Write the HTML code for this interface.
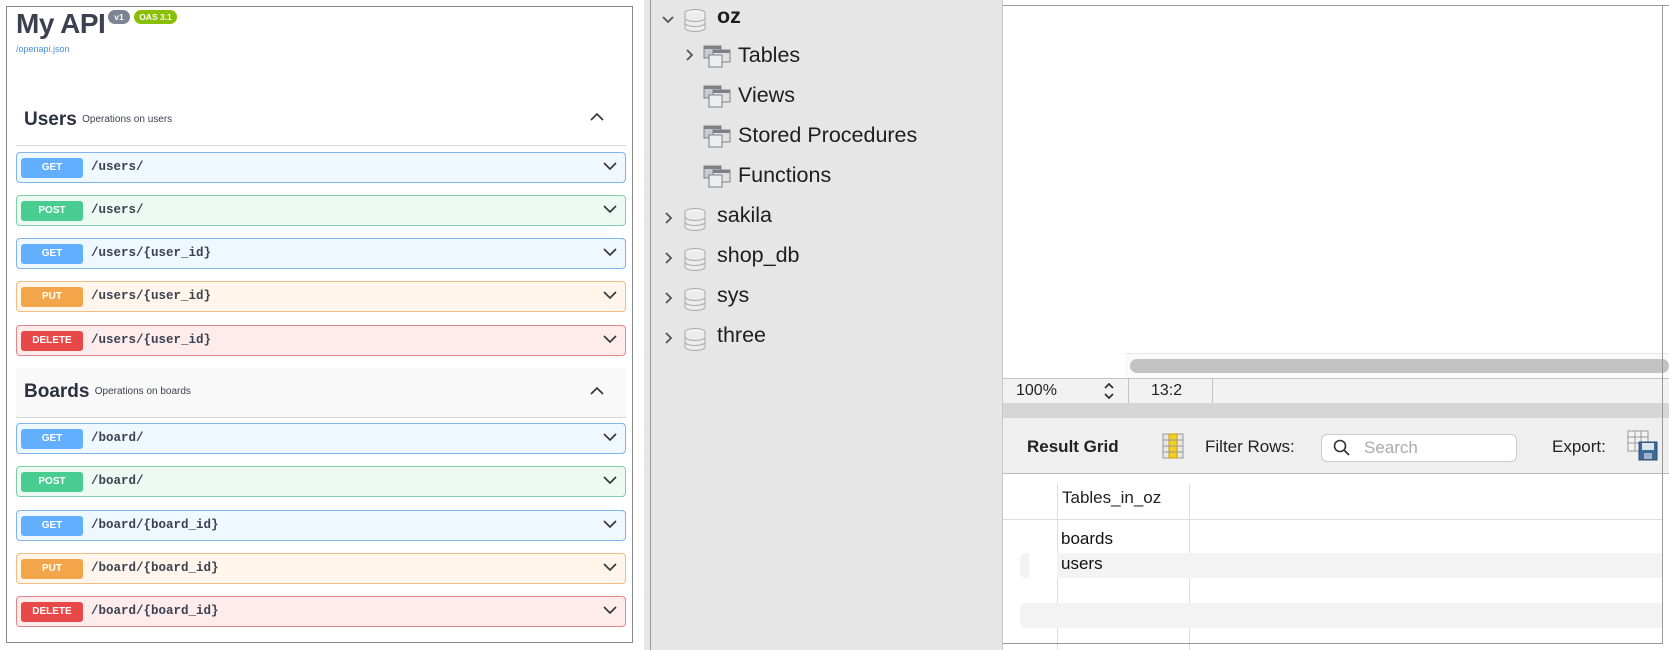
<!DOCTYPE html>
<html><head><meta charset="utf-8"><style>
*{margin:0;padding:0;box-sizing:border-box}
body{width:1669px;height:650px;position:relative;overflow:hidden;background:#fff;font-family:"Liberation Sans",sans-serif;color:#3b4151}
.a{position:absolute}
.row{position:absolute;left:16px;width:610px;height:31px;border:1px solid;border-radius:4px}
.m{position:absolute;left:4px;top:5px;width:62px;height:20px;border-radius:3px;color:#fff;font-size:10px;font-weight:bold;text-align:center;line-height:20px}
.p{position:absolute;left:74px;top:0;line-height:29px;font-family:"Liberation Mono",monospace;font-weight:bold;font-size:12.5px;color:#3b4151}
.chev{position:absolute;right:8px;top:8px}
.get{background:#eff7ff;border-color:#7fb5e8}.get .m{background:#61affe}
.post{background:#edfaf4;border-color:#7fcfa6}.post .m{background:#49cc90}
.put{background:#fff5ea;border-color:#f1bd84}.put .m{background:#f2a649}
.del{background:#feebeb;border-color:#e38686}.del .m{background:#e84848}
.tr{position:absolute;font-size:21.5px;color:#1e1e1e;line-height:26px}
</style></head><body>
<div class="a" style="left:6px;top:6px;width:627px;height:637px;border:1px solid #888"></div>
<div class="a" style="left:16px;top:7px;font-size:28px;font-weight:bold;color:#3b4151;line-height:34px;letter-spacing:-0.5px">My API</div>
<div class="a" style="left:108px;top:10px;width:22px;height:14px;border-radius:7px;background:#7d8492;color:#fff;font-size:8.5px;font-weight:bold;text-align:center;line-height:14px">v1</div>
<div class="a" style="left:134px;top:10px;width:43px;height:14px;border-radius:7px;background:#89bf04;color:#fff;font-size:8.5px;font-weight:bold;text-align:center;line-height:14px">OAS 3.1</div>
<div class="a" style="left:16px;top:44px;font-size:9px;color:#4990e2">/openapi.json</div>

<div class="a" style="left:24px;top:108px;font-size:19px;line-height:24px;color:#2b3141;font-weight:bold">Users <span style="font-size:10px;vertical-align:middle;font-weight:normal;color:#3b4151">Operations on users</span></div>
<svg class="a" style="left:590px;top:112px" width="14" height="10"><path d="M1 8 L7 2 L13 8" fill="none" stroke="#333" stroke-width="1.6"/></svg>
<div class="a" style="left:16px;top:145px;width:610px;height:1px;background:#d8d8d8"></div>

<div class="a" style="left:16px;top:368px;width:610px;height:50px;background:#f9f9f9;border-bottom:1px solid #d8d8d8"></div>
<div class="a" style="left:24px;top:380px;font-size:19px;line-height:24px;color:#2b3141;font-weight:bold">Boards <span style="font-size:10px;vertical-align:middle;font-weight:normal;color:#3b4151">Operations on boards</span></div>
<svg class="a" style="left:590px;top:386px" width="14" height="10"><path d="M1 8 L7 2 L13 8" fill="none" stroke="#333" stroke-width="1.6"/></svg>

<div class="row get" style="top:152px"><div class="m">GET</div><div class="p">/users/</div><svg class="chev" width="14" height="10"><path d="M1 2 L7 8 L13 2" fill="none" stroke="#333" stroke-width="1.6"/></svg></div>
<div class="row post" style="top:195px"><div class="m">POST</div><div class="p">/users/</div><svg class="chev" width="14" height="10"><path d="M1 2 L7 8 L13 2" fill="none" stroke="#333" stroke-width="1.6"/></svg></div>
<div class="row get" style="top:238px"><div class="m">GET</div><div class="p">/users/{user_id}</div><svg class="chev" width="14" height="10"><path d="M1 2 L7 8 L13 2" fill="none" stroke="#333" stroke-width="1.6"/></svg></div>
<div class="row put" style="top:281px"><div class="m">PUT</div><div class="p">/users/{user_id}</div><svg class="chev" width="14" height="10"><path d="M1 2 L7 8 L13 2" fill="none" stroke="#333" stroke-width="1.6"/></svg></div>
<div class="row del" style="top:325px"><div class="m">DELETE</div><div class="p">/users/{user_id}</div><svg class="chev" width="14" height="10"><path d="M1 2 L7 8 L13 2" fill="none" stroke="#333" stroke-width="1.6"/></svg></div>

<div class="row get" style="top:423px"><div class="m">GET</div><div class="p">/board/</div><svg class="chev" width="14" height="10"><path d="M1 2 L7 8 L13 2" fill="none" stroke="#333" stroke-width="1.6"/></svg></div>
<div class="row post" style="top:466px"><div class="m">POST</div><div class="p">/board/</div><svg class="chev" width="14" height="10"><path d="M1 2 L7 8 L13 2" fill="none" stroke="#333" stroke-width="1.6"/></svg></div>
<div class="row get" style="top:510px"><div class="m">GET</div><div class="p">/board/{board_id}</div><svg class="chev" width="14" height="10"><path d="M1 2 L7 8 L13 2" fill="none" stroke="#333" stroke-width="1.6"/></svg></div>
<div class="row put" style="top:553px"><div class="m">PUT</div><div class="p">/board/{board_id}</div><svg class="chev" width="14" height="10"><path d="M1 2 L7 8 L13 2" fill="none" stroke="#333" stroke-width="1.6"/></svg></div>
<div class="row del" style="top:596px"><div class="m">DELETE</div><div class="p">/board/{board_id}</div><svg class="chev" width="14" height="10"><path d="M1 2 L7 8 L13 2" fill="none" stroke="#333" stroke-width="1.6"/></svg></div>

<div class="a" style="left:644px;top:0;width:359px;height:650px;background:#e6e6e6"></div>
<div class="a" style="left:650px;top:0;width:1px;height:650px;background:#9a9a9a"></div>
<div class="a" style="left:1002px;top:0;width:1px;height:650px;background:#c8c8c8"></div>
<div class="a" style="left:1003px;top:5px;width:666px;height:1px;background:#999"></div>

<svg class="a" style="left:0;top:0" width="1003" height="360">
<defs>
<g id="db"><ellipse cx="11" cy="4" rx="10" ry="3.5" fill="#f2f2f2" stroke="#aaa"/><path d="M1 4 V19 A10 3.5 0 0 0 21 19 V4" fill="#ececec" stroke="#aaa"/><path d="M1 9 A10 3.5 0 0 0 21 9 M1 14 A10 3.5 0 0 0 21 14" fill="none" stroke="#aaa"/></g>
<g id="fo"><rect x="0" y="0" width="17" height="12" fill="#c9ccd0" stroke="#7d8186"/><rect x="0" y="0" width="17" height="3" fill="#7d8186"/><rect x="9" y="4" width="17" height="12" fill="#dfe1e3" stroke="#7d8186"/><rect x="9" y="4" width="17" height="3" fill="#7d8186"/><rect x="5" y="9" width="13" height="12" fill="#eceef0" stroke="#7d8186"/></g>
<path id="cr" d="M0 0 L5 5 L0 10" fill="none" stroke="#555" stroke-width="1.8"/>
</defs>
<path d="M663 17 L668 22 L673 17" fill="none" stroke="#555" stroke-width="1.8"/>
<use href="#db" x="684" y="9"/>
<use href="#cr" x="687" y="50"/><use href="#fo" x="704" y="46"/>
<use href="#fo" x="704" y="86"/>
<use href="#fo" x="704" y="126"/>
<use href="#fo" x="704" y="166"/>
<use href="#cr" x="666" y="213"/><use href="#db" x="684" y="208"/>
<use href="#cr" x="666" y="253"/><use href="#db" x="684" y="248"/>
<use href="#cr" x="666" y="293"/><use href="#db" x="684" y="288"/>
<use href="#cr" x="666" y="333"/><use href="#db" x="684" y="328"/>
</svg>
<div class="tr" style="left:717px;top:3px;font-weight:bold">oz</div>
<div class="tr" style="left:738px;top:42px">Tables</div>
<div class="tr" style="left:738px;top:82px">Views</div>
<div class="tr" style="left:738px;top:122px">Stored Procedures</div>
<div class="tr" style="left:738px;top:162px">Functions</div>
<div class="tr" style="left:717px;top:202px">sakila</div>
<div class="tr" style="left:717px;top:242px">shop_db</div>
<div class="tr" style="left:717px;top:282px">sys</div>
<div class="tr" style="left:717px;top:322px">three</div>

<div class="a" style="left:1125px;top:353px;width:544px;height:25px;background:#fafafa;border-top:1px solid #e6e6e6"></div>
<div class="a" style="left:1130px;top:359px;width:539px;height:14px;border-radius:7px;background:#c2c2c2"></div>
<div class="a" style="left:1003px;top:378px;width:666px;height:25px;background:#f2f2f2;border-top:1px solid #c4c4c4"></div>
<div class="a" style="left:1016px;top:381px;font-size:16px;color:#222;line-height:20px">100%</div>
<svg class="a" style="left:1102px;top:381px" width="14" height="20"><path d="M3 7 L7 3 L11 7 M3 13 L7 17 L11 13" fill="none" stroke="#333" stroke-width="1.8"/></svg>
<div class="a" style="left:1128px;top:379px;width:1px;height:24px;background:#c4c4c4"></div>
<div class="a" style="left:1151px;top:381px;font-size:16px;color:#222;line-height:20px">13:2</div>
<div class="a" style="left:1212px;top:379px;width:1px;height:24px;background:#c4c4c4"></div>
<div class="a" style="left:1003px;top:403px;width:666px;height:15px;background:#d6d6d6"></div>
<div class="a" style="left:1003px;top:418px;width:666px;height:56px;background:#efefef;border-bottom:1px solid #b8b8b8"></div>
<div class="a" style="left:1027px;top:436px;font-size:17px;font-weight:bold;color:#222;line-height:22px">Result Grid</div>
<svg class="a" style="left:1162px;top:433px" width="22" height="26"><rect x="1" y="1" width="20" height="24" fill="#e8e8e8" stroke="#999"/><rect x="7" y="1" width="8" height="24" fill="#f3cd2a" stroke="#c9a000"/><path d="M1 7H21M1 13H21M1 19H21" stroke="#999"/></svg>
<div class="a" style="left:1205px;top:436px;font-size:17px;color:#222;line-height:22px">Filter Rows:</div>
<div class="a" style="left:1321px;top:434px;width:196px;height:28px;background:#fff;border:1px solid #ccc;border-radius:6px"></div>
<svg class="a" style="left:1333px;top:439px" width="18" height="18"><circle cx="7" cy="7" r="5.5" fill="none" stroke="#333" stroke-width="1.6"/><path d="M11 11 L16 16" stroke="#333" stroke-width="1.8"/></svg>
<div class="a" style="left:1364px;top:437px;font-size:17px;color:#aaa;line-height:22px">Search</div>
<div class="a" style="left:1552px;top:436px;font-size:17px;color:#222;line-height:22px">Export:</div>
<svg class="a" style="left:1627px;top:430px" width="32" height="32"><rect x="1" y="1" width="20" height="20" fill="#f4f4f4" stroke="#999"/><path d="M1 7H21M1 13H21M8 1V21M14 1V21" stroke="#999"/><rect x="12" y="12" width="18" height="18" fill="#3d6a96" stroke="#2c4f72"/><rect x="15" y="13" width="12" height="7" fill="#dde6ef"/><rect x="17" y="23" width="8" height="6" fill="#9fb4c9"/></svg>
<div class="a" style="left:1057px;top:484px;width:1px;height:166px;background:#ddd"></div>
<div class="a" style="left:1189px;top:484px;width:1px;height:166px;background:#ddd"></div>
<div class="a" style="left:1062px;top:487px;font-size:17px;color:#222;line-height:22px">Tables_in_oz</div>
<div class="a" style="left:1003px;top:519px;width:659px;height:1px;background:#ddd"></div>
<div class="a" style="left:1020px;top:553px;width:642px;height:25px;background:#f3f3f3;border-radius:6px 0 0 6px"></div>
<div class="a" style="left:1029px;top:553px;width:28px;height:25px;background:#fff"></div>
<div class="a" style="left:1020px;top:603px;width:642px;height:25px;background:#f3f3f3;border-radius:6px 0 0 6px"></div>
<div class="a" style="left:1061px;top:528px;font-size:17px;color:#111;line-height:22px">boards</div>
<div class="a" style="left:1061px;top:553px;font-size:17px;color:#111;line-height:22px">users</div>
<div class="a" style="left:1662px;top:5px;width:1px;height:638px;background:#999"></div>
<div class="a" style="left:1003px;top:643px;width:660px;height:1px;background:#999"></div>
</body></html>
